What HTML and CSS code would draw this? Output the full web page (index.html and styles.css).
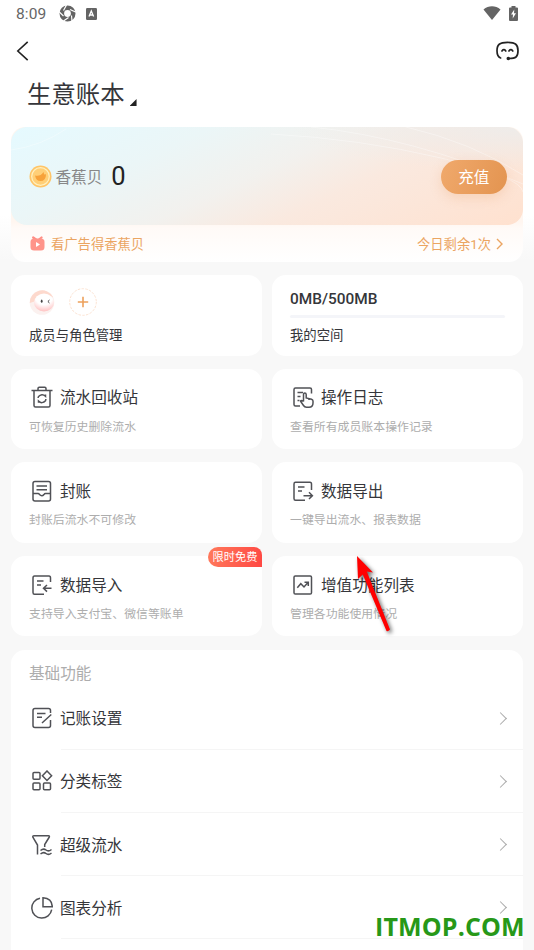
FILE: index.html
```html
<!DOCTYPE html>
<html lang="zh-CN">
<head>
<meta charset="utf-8">
<title>生意账本</title>
<link rel="stylesheet" href="styles.css">
</head>
<body>
<main class="screen">
  <header class="status">
    <span class="time">8:09</span>
    <svg class="st-aperture" width="17" height="17" viewBox="0 0 17 17"><circle cx="8.500" cy="8.500" r="5.700" fill="none" stroke="#646464" stroke-width="4.600"/><path d="M7.500 0L4.500 5.500M16.500 7L11 4.500M13 16L12.500 10.500M4.500 16L9.500 12.500M.3 7L4.500 11" stroke="#fff" stroke-width="1.200"/></svg>
    <svg class="st-a" width="11" height="12" viewBox="0 0 11 12"><rect width="11" height="12" rx="1.200" fill="#646464"/><path d="M3 8.600L5.300 3L7.600 8.600M3.800 7H6.900" fill="none" stroke="#fff" stroke-width="1.300"/></svg>
    <span class="grow"></span>
    <svg width="18" height="14" viewBox="0 0 18 14"><path d="M.5 3.600C5.500-.8 12.500-.8 17.500 3.600L9 14Z" fill="#646464"/></svg>
    <svg class="st-battery" width="9" height="15" viewBox="0 0 9 15"><path d="M2.500 0H6.500V1.500H8Q9 1.500 9 2.500V14Q9 15 8 15H1Q0 15 0 14V2.500Q0 1.500 1 1.500H2.500Z" fill="#646464"/><path d="M5.300 3.500L2 8.500H4L3.700 12.500L7 7.300H5Z" fill="#fff"/></svg>
  </header>
  <nav class="nav">
    <svg width="13" height="20" viewBox="0 0 13 20"><path d="M11.700 .8L1.800 10L11.700 19.200" fill="none" stroke="#222" stroke-width="1.600"/></svg>
    <svg width="23" height="20" viewBox="0 0 23 20"><path d="M4.600 17C2 16.100 1 14.500 1 9.800C1 3.500 3.500 1.400 11.500 1.400S22 3.500 22 9.800C22 16 19.700 17.500 13 17.500" fill="none" stroke="#222" stroke-width="1.700" stroke-linecap="round"/><circle cx="12.300" cy="17.500" r="1.800" fill="#222"/><path d="M6 10.700V9.700Q7.900 7.500 9.700 9.700V10.700M13 10.700V9.700Q14.900 7.500 16.700 9.700V10.700" fill="none" stroke="#222" stroke-width="1.600"/></svg>
  </nav>
  <h1 class="book">生意账本<span class="corner"></span></h1>

  <section class="wallet">
    <div class="balance">
      <svg class="waves" viewBox="0 0 512 98" preserveAspectRatio="none"><path d="M0 23Q30 19 55 2M260 7Q350 12 430 31T512 65M300 0Q400 10 512 57M395 0Q460 15 512 48" fill="none" stroke="#fff" stroke-opacity=".35"/></svg>
      <svg class="coin" width="23" height="23" viewBox="0 0 23 23"><circle cx="11.500" cy="11.500" r="11" fill="#ffc568"/><circle cx="11.500" cy="11.500" r="8.800" fill="#ffcf77" stroke="#fff0bf" stroke-width="1.200"/><path d="M6 10.500Q11 12 14.500 7L15.200 9.500L17 9.200Q17 16 11.500 16Q7 16 6 10.500Z" fill="#f7a23a"/></svg>
      <span class="coin-name">香蕉贝</span><span class="coin-count">0</span>
      <span class="grow"></span>
      <span class="recharge">充值</span>
    </div>
    <div class="ad">
      <svg width="15" height="15" viewBox="0 0 15 15"><path d="M3.200 1.500L6 3.500M11.500 1.500L9 3.500" stroke="#ff8d84" stroke-width="2.200" stroke-linecap="round"/><rect x=".5" y="2.500" width="14" height="12" rx="3.500" fill="#ff948a"/><path d="M6 6V11L10 8.500Z" fill="#fff"/></svg>
      <span class="ad-text">看广告得香蕉贝</span><span class="grow"></span><span class="ad-left">今日剩余1次</span>
      <svg width="7" height="12" viewBox="0 0 7 12"><path d="M1 1L6 6L1 11" fill="none" stroke="#eba562" stroke-width="1.400"/></svg>
    </div>
  </section>

  <section class="grid">
    <article class="card">
      <div class="members">
        <svg width="27" height="27" viewBox="0 0 27 27"><defs><radialGradient id="face" cx=".5" cy=".2" r=".85"><stop offset=".5" stop-color="#fff"/><stop offset=".95" stop-color="#ffc0c0"/></radialGradient></defs><circle cx="13" cy="13.500" r="12.300" fill="#fbf1ef"/><path d="M.8 14A12.300 12.300 0 0 1 24 8L13 10Z" fill="#fdd9cd"/><ellipse cx="15" cy="13.500" rx="10" ry="9" fill="url(#face)"/><ellipse cx="12.700" cy="12.200" rx=".9" ry="1.600" fill="#444"/><path d="M20.500 11L18.900 12.500L20.500 14" fill="none" stroke="#444"/></svg>
        <svg width="28" height="28" viewBox="0 0 28 28"><circle cx="14" cy="14" r="13.300" fill="none" stroke="#fce3d2" stroke-dasharray="2.500 1.300"/><path d="M14 8.800V19.200M8.800 14H19.200" stroke="#eda15c" stroke-width="1.600"/></svg>
      </div>
      <p class="label">成员与角色管理</p>
    </article>
    <article class="card">
      <p class="quota">0MB/500MB</p><div class="bar"></div><p class="label">我的空间</p>
    </article>
    <article class="card">
      <h2><svg class="icon" viewBox="0 0 22 22"><path d="M.5 4.500H21.500M7 4.500V2.500Q7 1.300 8.200 1.300H13.800Q15 1.300 15 2.500V4.500M3 4.500V19.500Q3 21 4.500 21H17.500Q19 21 19 19.500V4.500"/><path d="M7.200 10.800Q11 6.800 14.500 10.300V8.500M14.800 14.500Q11 18.500 7.500 15V16.800M7.200 10.800V12M14.800 13V14.500"/></svg><span>流水回收站</span></h2><p class="sub">可恢复历史删除流水</p>
    </article>
    <article class="card">
      <h2><svg class="icon" viewBox="0 0 22 22"><path d="M8 20H3.500Q2 20 2 18.500V3.500Q2 2 3.500 2H18Q19.500 2 19.500 3.500V7.500M5.500 6.500H11M5.500 10.500H8.500M5.500 14.500H7.500"/><path d="M11.500 15.500V8.500Q11.500 7 12.800 7T14.200 8.500V12L19.500 13.200Q21 13.600 21 15V17Q21 21.200 17 21.200H14.500Q12.500 21.200 11.500 19.500L8.700 15.500Q8.500 13.500 11.500 15.500M17 12.700V14"/></svg><span>操作日志</span></h2><p class="sub">查看所有成员账本操作记录</p>
    </article>
    <article class="card">
      <h2><svg class="icon" viewBox="0 0 22 22"><rect x="2" y="1.500" width="17.500" height="19.500" rx="2"/><path d="M5.500 6H16M5.500 9.700H16M2 13.500H7Q8 13.500 8.500 14.500Q10.800 17 13 14.500Q13.500 13.500 14.500 13.500H19.500"/></svg><span>封账</span></h2><p class="sub">封账后流水不可修改</p>
    </article>
    <article class="card">
      <h2><svg class="icon" viewBox="0 0 22 22"><path d="M19.500 10V4Q19.500 2.300 18 2.300H3.500Q2 2.300 2 4V18.500Q2 20.300 3.500 20.300H13M6 7H12.500M6 11H10M11.500 15.700H20M17 12.300L20.400 15.700L17 19"/></svg><span>数据导出</span></h2><p class="sub">一键导出流水、报表数据</p>
    </article>
    <article class="card">
      <span class="badge">限时免费</span>
      <h2><svg class="icon" viewBox="0 0 22 22"><path d="M19.500 8V4Q19.500 2 18 2H3.500Q2 2 2 4V18.500Q2 20.300 3.500 20.300H13M6 7H12.500M6 11H10M20.500 14.300H13M16 11L12.500 14.300L16 17.600"/></svg><span>数据导入</span></h2><p class="sub">支持导入支付宝、微信等账单</p>
    </article>
    <article class="card">
      <h2><svg class="icon" viewBox="0 0 22 22"><rect x="2" y="2" width="17.500" height="18" rx="1.300"/><path d="M5.300 13.700L8.800 9.700L12 13L16 8.500M12.500 8.300H16.300V12"/></svg><span>增值功能列表</span></h2><p class="sub">管理各功能使用情况</p>
    </article>
  </section>

  <section class="list">
    <h3>基础功能</h3>
    <div class="row"><svg class="icon" viewBox="0 0 22 22"><path d="M19.500 6V3.500Q19.500 1.500 17.500 1.500H4Q2 1.500 2 3.500V18.500Q2 20.500 4 20.500H17.500Q19.500 20.500 19.500 18.500V13M6 6.500H14.500M6 10.300H11M11 16L20.300 7.500"/></svg><span>记账设置</span><i class="chev"></i></div>
    <div class="row"><svg class="icon" viewBox="0 0 22 22"><rect x="2" y="2.500" width="7" height="6.700" rx="1"/><rect x="2" y="13" width="7" height="6.700" rx="1"/><rect x="12.500" y="13" width="7" height="6.700" rx="1"/><path d="M16 1L20.600 5.700L16 10.400L11.400 5.700Z"/></svg><span>分类标签</span><i class="chev"></i></div>
    <div class="row"><svg class="icon" viewBox="0 0 22 22"><path d="M6.500 20.500V11L2 3.500Q1.300 1.800 3 1.800H17.500Q19 1.800 18 3.500L13.700 10.500V13M9.500 16.500Q12.500 14 15 16T20.500 15.500M9.500 20Q12.500 17.500 15 19.500T20.500 19"/></svg><span>超级流水</span><i class="chev"></i></div>
    <div class="row"><svg class="icon" viewBox="0 0 22 22"><path d="M9 1.200A10 10 0 1 0 20.700 12.700M12 .8V9.800H21.300Q21 1.300 12 .8Z"/></svg><span>图表分析</span><i class="chev"></i></div>
    <div class="row"></div>
  </section>

  <svg class="arrow" width="50" height="90" viewBox="0 0 50 90"><path d="M7 6L23 22.500L16.800 21.500L40 79.500Q38 82 36.500 81L12.800 24.500L8 29Z" fill="#f00"/></svg>
  <div class="watermark">ITMOP.COM</div>
</main>
</body>
</html>
```
FILE: styles.css
```css
* { box-sizing: border-box; }
body { margin: 0; font-family: Roboto, "Noto Sans CJK SC", sans-serif; color: #35363a; }
h1, h2, h3, p { margin: 0; font-weight: 400; }
svg { display: block; flex: none; }
.screen { position: relative; width: 534px; height: 950px; overflow: hidden; background: linear-gradient(#fff 0, #fff 215px, #f8f8f8 260px); }
.grow { flex: 1; }

.status { display: flex; align-items: center; height: 27px; padding: 0 15px 0 16px; }
.time { width: 31px; font-size: 15.5px; letter-spacing: .1px; color: #666; white-space: nowrap; }
.st-aperture { margin-left: 12px; }
.st-a { margin-left: 10px; }
.st-battery { margin-left: 8px; margin-right: 1px; }
.status > svg:nth-last-child(2) { margin-top: -1px; }

.nav { display: flex; justify-content: space-between; align-items: center; height: 48px; padding: 0 15px 0 16px; }
.book { display: flex; align-items: flex-end; height: 52px; padding: 0 0 13px 27px; font-size: 24.4px; line-height: 38px; }
.corner { width: 7px; height: 7px; margin: 0 0 8px 5px; background: #222; clip-path: polygon(100% 0, 100% 100%, 0 100%); }

.wallet { width: 512px; height: 135px; margin-left: 11px; border-radius: 14px; background: linear-gradient(#fff6f0 70%, #fffaf7 75%, #fff); overflow: hidden; }
.balance { position: relative; display: flex; align-items: center; height: 98px; padding: 2px 16px 0 18px; border-radius: 16px; overflow: hidden;
  background: radial-gradient(ellipse at 100% 0, #eeecea 0, rgba(238,236,234,0) 32%), linear-gradient(155deg, #e5faff 0, #ebf6f7 28%, #f2f1ee 48%, #fae9df 65%, #ffe1cf 100%); }
.waves { position: absolute; inset: 0; width: 100%; height: 100%; }
.coin { margin-top: -1px; }
.coin-name { margin: -3px 0 0 3.5px; font-size: 15.6px; color: #888; }
.coin-count { margin: -3px 0 0 9px; font-size: 25.5px; color: #222; }
.recharge { position: relative; width: 66.5px; height: 34px; border-radius: 17px; background: linear-gradient(110deg, #f0a96c, #e39450); box-shadow: 0 4px 12px rgba(232,156,96,.25); color: #fff; font-size: 15.6px; line-height: 36px; text-align: center; }
.ad { display: flex; align-items: center; height: 37px; padding: 0 20px 0 19px; font-size: 13.3px; color: #eba562; }
.ad-text { margin-left: 6px; }
.ad-left { margin-right: 5px; }

.grid { display: grid; grid-template-columns: 251px 251px; grid-auto-rows: 80.3px; gap: 13.3px 10px; margin: 13.3px 0 0 11px; }
.card { position: relative; padding: 17px 18px 0; border-radius: 14px; background: #fff; }
.card h2 { display: flex; align-items: center; height: 23px; font-size: 15.6px; line-height: 23px; }
.card h2 span { padding-top: 3px; }
.icon { width: 22px; height: 22px; margin: 0 7px 0 2px; fill: none; stroke: #505156; stroke-width: 1.5; }
.sub { margin-top: 9px; font-size: 11.9px; line-height: 18px; color: #adadad; }
.members { display: flex; align-items: center; gap: 13px; height: 28px; margin-top: -4px; }
.label { margin-top: 10px; font-size: 13.35px; line-height: 20px; }
.quota { height: 20px; margin-top: -3px; font-size: 15.4px; font-weight: 500; line-height: 20px; }
.bar { height: 3.5px; margin-top: 5.5px; border-radius: 2px; background: #f4f5f9; }
.bar + .label { margin-top: 7.5px; }
.badge { position: absolute; top: -9px; right: 0; width: 54px; height: 20px; border-radius: 10px 8px 0 10px; background: linear-gradient(100deg, #ff7a5c, #ff4843); color: #fff; font-size: 11.2px; line-height: 21px; text-align: center; }

.list { width: 512px; height: 320px; margin: 13.3px 0 0 11px; padding: 13px 0 0 18px; border-radius: 14px 14px 0 0; background: #fff; }
.list h3 { height: 24px; font-size: 15.6px; line-height: 23px; color: #adadad; }
.row { display: flex; align-items: center; height: 63.2px; font-size: 15.6px;
  background: linear-gradient(#f5f5f5, #f5f5f5) 32px 100% / 100% 1px no-repeat; }
.row span { flex: 1; padding-bottom: 2px; }
.chev { width: 9px; height: 9px; margin-right: 18px; border: solid #aaa; border-width: 1.5px 1.5px 0 0; transform: rotate(45deg); }

.arrow { position: absolute; left: 350px; top: 550px; filter: drop-shadow(2px 2px 2px rgba(0,0,0,.6)); }
.watermark { position: absolute; left: 375px; top: 911px; font: 700 25px/30px "Open Sans", "Noto Sans", sans-serif; letter-spacing: .15px; color: #279818; white-space: nowrap; }
```
